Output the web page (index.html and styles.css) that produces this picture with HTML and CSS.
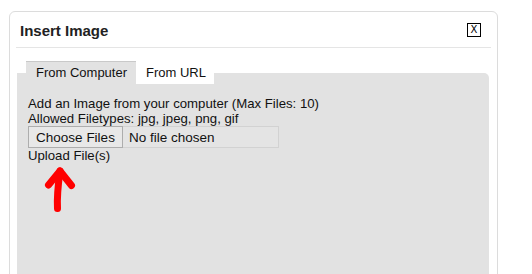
FILE: index.html
```html
<!DOCTYPE html>
<html>
<head>
<meta charset="utf-8">
<link rel="stylesheet" href="styles.css">
</head>
<body>
<div class="dialog">
  <div class="header">
    <span class="title">Insert Image</span>
    <span class="close">X</span>
  </div>
  <div class="body">
    <div class="tabs">
      <span class="tab active">From Computer</span>
      <span class="tab">From URL</span>
    </div>
    <div class="panel">
      <div class="line">Add an Image from your computer (Max Files: 10)</div>
      <div class="line">Allowed Filetypes: jpg, jpeg, png, gif</div>
      <div class="file">
        <span class="choose">Choose Files</span>
        <span class="chosen">No file chosen</span>
      </div>
      <div class="line">Upload File(s)</div>
      <svg class="arrow" width="40" height="50" viewBox="0 0 40 50">
        <path d="M17.5 45.5 C17 37 17.5 26 20 8" fill="none" stroke="#ff0000" stroke-width="7" stroke-linecap="round" stroke-linejoin="round"/>
        <path d="M8.5 22 L20 8 L31.5 22.5" fill="none" stroke="#ff0000" stroke-width="7" stroke-linecap="round" stroke-linejoin="round"/>
      </svg>
    </div>
  </div>
</div>
</body>
</html>
```
FILE: styles.css
```css
html, body {
  margin: 0;
  padding: 0;
  background: #ffffff;
}
body {
  padding: 11px 0 0 9px;
  font-family: "Liberation Sans", Arial, sans-serif;
  font-size: 13px;
  color: #111;
  height: 263px;
  overflow: hidden;
}
.dialog {
  width: 487px;
  height: 300px;
  border: 1px solid #dcdcdc;
  border-radius: 6px;
  background: #fff;
}
.header {
  margin: 0 6px;
  height: 35px;
  border-bottom: 1px solid #e5e5e5;
  display: flex;
  align-items: center;
  justify-content: space-between;
  padding: 0 10px 0 4px;
}
.title {
  font-size: 15px;
  font-weight: bold;
  color: #222;
  padding-top: 1px;
}
.close {
  width: 12px;
  height: 12px;
  border: 1px solid #000;
  font-size: 10px;
  line-height: 12px;
  text-align: center;
  color: #000;
  font-family: "DejaVu Sans", sans-serif;
}
.body {
  padding: 13px 8px 0 7px;
}
.tabs {
  display: flex;
  padding-left: 9px;
  position: relative;
  z-index: 1;
  margin-bottom: -11px;
}
.tab {
  height: 23px;
  line-height: 23px;
  padding: 0 8px 0 10px;
  background: #fff;
  color: #111;
}
.tab.active {
  background: #e2e2e2;
  border-top: 1px solid #c9c9c9;
  height: 12px;
  line-height: 22px;
  padding: 0 9px 0 10px;
  overflow: visible;
}
.panel {
  background: #e2e2e2;
  border-radius: 0 5px 0 0;
  height: 200px;
  padding: 23px 11px 0 11px;
  line-height: 15px;
  font-size: 13.2px;
}
.line {
  height: 15px;
}
.file {
  display: flex;
  width: 249px;
  height: 20px;
  border: 1px solid #d2d2d2;
  background: #e4e4e4;
  margin: 0;
  align-items: stretch;
}
.choose {
  width: 93px;
  border: 1px solid #adadad;
  margin: -1px 0 -1px -1px;
  background: #e8e8e8;
  display: flex;
  align-items: center;
  justify-content: center;
  font-size: 13.5px;
}
.chosen {
  padding-left: 6px;
  display: flex;
  align-items: center;
  font-size: 13.5px;
}
.arrow {
  display: block;
  margin: 0 0 0 12px;
}
```
